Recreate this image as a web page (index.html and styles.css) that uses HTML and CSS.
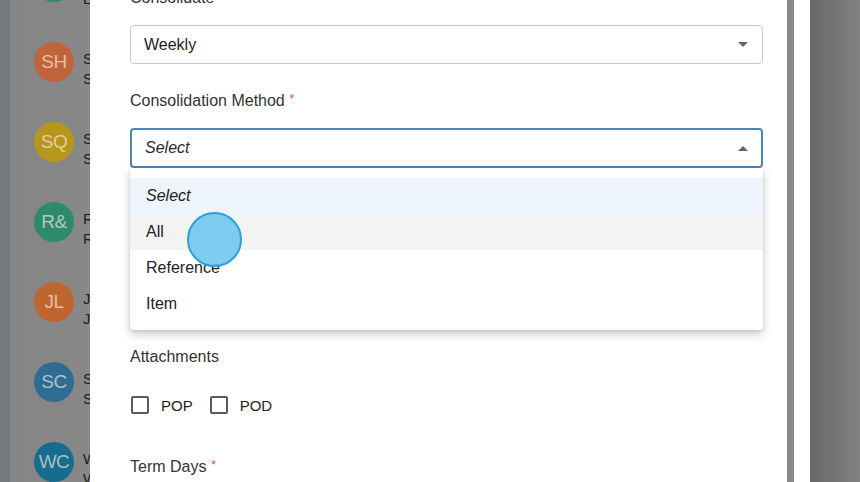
FILE: index.html
```html
<!DOCTYPE html>
<html lang="en">
<head>
<meta charset="utf-8">
<title>Consolidation settings</title>
<link rel="stylesheet" href="styles.css">
</head>
<body>
<div class="backdrop-side">
  <div class="edge"></div>
  <div class="people">
    <div class="person"><div class="avatar av-green">EL</div><div class="person-text"><div>Elena Lopez</div><div>Logistics</div></div></div>
    <div class="person"><div class="avatar av-orange">SH</div><div class="person-text"><div>Sarah Hughes</div><div>Supplier</div></div></div>
    <div class="person"><div class="avatar av-mustard">SQ</div><div class="person-text"><div>Sam Quinn</div><div>Supplier</div></div></div>
    <div class="person"><div class="avatar av-teal">R&amp;</div><div class="person-text"><div>R&amp;D Supplies</div><div>Retail</div></div></div>
    <div class="person"><div class="avatar av-orange2">JL</div><div class="person-text"><div>James Lee</div><div>Jobber</div></div></div>
    <div class="person"><div class="avatar av-blue">SC</div><div class="person-text"><div>Steve Carter</div><div>Supplier</div></div></div>
    <div class="person"><div class="avatar av-blue2">WC</div><div class="person-text"><div>Will Cooper</div><div>Wholesale</div></div></div>
  </div>
</div>

<div class="modal">
  <div class="form">
    <div class="field">
      <label class="label">Consolidate</label>
      <div class="select">
        <span class="value">Weekly</span>
        <span class="caret caret-down"></span>
      </div>
    </div>

    <div class="field field-open">
      <label class="label">Consolidation Method <span class="req">*</span></label>
      <div class="select-wrap">
        <div class="select select-focus">
          <span class="value placeholder">Select</span>
          <span class="caret caret-up"></span>
        </div>
        <ul class="dropdown">
          <li class="option option-selected placeholder">Select</li>
          <li class="option option-hover">All</li>
          <li class="option">Reference</li>
          <li class="option">Item</li>
        </ul>
      </div>
    </div>

    <div class="covered"></div>

    <div class="field-attach">
      <label class="label">Attachments</label>
      <div class="checks">
        <span class="check"><span class="box"></span>POP</span>
        <span class="check"><span class="box"></span>POD</span>
      </div>
    </div>

    <div class="field">
      <label class="label">Term Days <span class="req">*</span></label>
    </div>
  </div>
</div>

<div class="scroll-strip"></div>
<div class="page-white"></div>
<div class="page-dark"></div>

<div class="cursor"></div>
</body>
</html>
```
FILE: styles.css
```css
* { box-sizing: border-box; }

html, body {
  margin: 0;
  padding: 0;
}

body {
  width: 860px;
  height: 482px;
  overflow: hidden;
  display: flex;
  position: relative;
  font-family: "Liberation Sans", Arial, sans-serif;
  background: #868686;
}

/* left backdrop */
.backdrop-side {
  width: 90px;
  display: flex;
  flex-shrink: 0;
}
.edge {
  width: 10px;
  background: #757a7f;
}
.people {
  flex: 1;
  background: linear-gradient(to right, #858585, #888888);
  padding-left: 24px;
  overflow: hidden;
}
.person {
  display: flex;
  align-items: flex-start;
  gap: 9px;
  height: 40px;
  margin-bottom: 40px;
  white-space: nowrap;
}
.person:first-child { margin-top: -38px; }
.avatar {
  width: 40px;
  height: 40px;
  border-radius: 50%;
  flex-shrink: 0;
  display: flex;
  align-items: center;
  justify-content: center;
  color: rgba(255, 235, 225, 0.66);
  font-size: 19px;
  letter-spacing: -0.5px;
}
.person-text {
  margin-top: 7px;
  font-size: 15px;
  line-height: 20px;
  color: #1c1c1c;
}
.av-green { background: #2f8a68; }
.av-orange { background: #c2643a; }
.av-mustard { background: #b7961c; }
.av-teal { background: #2e8a6c; }
.av-orange2 { background: #bf652f; }
.av-blue { background: #2e6c94; }
.av-blue2 { background: #166c8e; }

/* modal */
.modal {
  width: 697px;
  flex-shrink: 0;
  background: #ffffff;
  padding: 0 24px 0 40px;
  overflow: hidden;
}
.form {
  margin-top: -12px;
}
.label {
  display: block;
  font-size: 16px;
  line-height: 20px;
  color: #333333;
  margin-bottom: 17px;
}
.req {
  color: #e0574f;
  font-size: 13px;
  vertical-align: 3px;
}
.field {
  margin-bottom: 25px;
}
.field-open { margin-bottom: 0; }

.select {
  height: 39px;
  border: 1px solid #c8c8c8;
  border-radius: 4px;
  padding: 0 14px 0 13px;
  display: flex;
  align-items: center;
  justify-content: space-between;
  font-size: 16px;
  color: #222222;
  background: #fff;
}
.select-focus {
  height: 40px;
  border: 2px solid #4c84b2;
  padding: 0 13px 0 13px;
}
.placeholder {
  font-style: italic;
  color: #2a2a2a;
}
.caret {
  width: 0;
  height: 0;
  border-left: 5px solid transparent;
  border-right: 5px solid transparent;
}
.caret-down { border-top: 5px solid #666666; }
.caret-up { border-bottom: 5px solid #666666; }

.select-wrap { position: relative; }
.dropdown {
  position: absolute;
  top: 100%;
  left: 0;
  right: 0;
  margin: 0;
  padding: 10px 0 8px;
  list-style: none;
  background: #ffffff;
  border-radius: 0 0 4px 4px;
  box-shadow: 0 4px 10px rgba(0, 0, 0, 0.22), 0 1px 3px rgba(0, 0, 0, 0.08);
  z-index: 2;
}
.option {
  height: 36px;
  line-height: 36px;
  padding-left: 16px;
  font-size: 16px;
  color: #222222;
}
.option-selected { background: #eef4fb; }
.option-hover { background: #f3f3f3; }

.covered {
  height: 179px;
}

.field-attach .label { margin-bottom: 28px; }
.checks {
  display: flex;
  align-items: center;
  gap: 17px;
  height: 20px;
  margin-bottom: 40px;
  padding-left: 1px;
}
.check {
  display: flex;
  align-items: center;
  gap: 12px;
  font-size: 15px;
  color: #222222;
}
.box {
  width: 18px;
  height: 18px;
  border: 2px solid #5a5a5a;
  border-radius: 2px;
}

/* right side */
.scroll-strip {
  width: 7px;
  background: #898989;
  flex-shrink: 0;
}
.page-white {
  width: 16px;
  background: #ffffff;
  flex-shrink: 0;
}
.page-dark {
  flex: 1;
  background: linear-gradient(to right, #686868, #818181);
}

/* pointer highlight */
.cursor {
  position: absolute;
  left: 187px;
  top: 212px;
  width: 55px;
  height: 55px;
  border-radius: 50%;
  background: rgba(110, 196, 238, 0.88);
  border: 2px solid #2aa2dc;
  z-index: 5;
}
```
